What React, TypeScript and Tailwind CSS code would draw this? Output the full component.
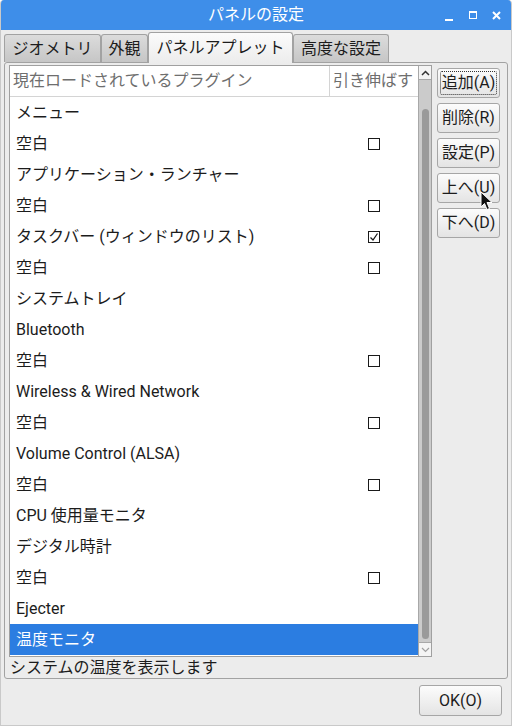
import React from "react";

interface PluginRow {
  label: string;
  stretch?: boolean;
  selected?: boolean;
}

const rows: PluginRow[] = [
  { label: "メニュー" },
  { label: "空白", stretch: false },
  { label: "アプリケーション・ランチャー" },
  { label: "空白", stretch: false },
  { label: "タスクバー (ウィンドウのリスト)", stretch: true },
  { label: "空白", stretch: false },
  { label: "システムトレイ" },
  { label: "Bluetooth" },
  { label: "空白", stretch: false },
  { label: "Wireless & Wired Network" },
  { label: "空白", stretch: false },
  { label: "Volume Control (ALSA)" },
  { label: "空白", stretch: false },
  { label: "CPU 使用量モニタ" },
  { label: "デジタル時計" },
  { label: "空白", stretch: false },
  { label: "Ejecter" },
  { label: "温度モニタ", selected: true },
];

const tabs = [
  { label: "ジオメトリ", w: "w-[97px]" },
  { label: "外観", w: "w-[47px]" },
  { label: "パネルアプレット", w: "w-[145px]", active: true },
  { label: "高度な設定", w: "w-[96px]" },
];

const buttons = ["追加(A)", "削除(R)", "設定(P)", "上へ(U)", "下へ(D)"];

function CheckBox({ checked }: { checked: boolean }) {
  return (
    <div className="w-[12px] h-[12px] border border-[#1a1a1a] bg-white flex items-center justify-center">
      {checked && (
        <svg width="10" height="10" viewBox="0 0 10 10">
          <path d="M1.5 5.5 L4 8 L8.5 1.5" fill="none" stroke="#1a1a1a" strokeWidth="1.3" />
        </svg>
      )}
    </div>
  );
}

export default function App() {
  return (
    <div className="relative w-[512px] h-[726px] flex flex-col bg-[#ececec] border-x border-b border-[#c9c9c9] rounded-t-[4px] overflow-hidden font-['Roboto','Noto_Sans_CJK_JP',sans-serif] text-[16px] text-[#1c1c1c]">
      {/* title bar */}
      <div className="h-[30px] shrink-0 bg-[#3e8ee9] flex items-center px-[10px]">
        <div className="w-[56px]" />
        <div className="flex-1 text-center text-white leading-none">パネルの設定</div>
        <div className="w-[56px] flex items-center justify-between">
          <div className="w-[8px] h-[2px] bg-white mt-[10px]" />
          <div className="w-[8px] h-[8px] border border-white border-t-2" />
          <svg width="9" height="9" viewBox="0 0 9 9">
            <path d="M1 1 L8 8 M8 1 L1 8" stroke="white" strokeWidth="2" />
          </svg>
        </div>
      </div>

      {/* tabs */}
      <div className="mt-[2px] px-[3px] h-[30px] flex items-end shrink-0">
        {tabs.map(t =>
          t.active ? (
            <div
              key={t.label}
              className={`${t.w} h-[31px] -mb-px relative z-10 rounded-t-[3px] border border-b-0 border-[#a2a2a2] bg-gradient-to-b from-[#fbfbfb] to-[#ececec] flex items-center justify-center`}
            >
              {t.label}
            </div>
          ) : (
            <div
              key={t.label}
              className={`${t.w} h-[28px] rounded-t-[3px] border border-b-0 border-[#a2a2a2] bg-gradient-to-b from-[#dcdcdc] to-[#c6c6c6] flex items-center justify-center`}
            >
              {t.label}
            </div>
          )
        )}
      </div>

      {/* frame */}
      <div className="mx-[3px] h-[617px] shrink-0 border border-[#a2a2a2] rounded-[3px] bg-[#ececec] flex pl-[4px] pt-[2px] gap-[5px]">
        <div className="w-[423px] flex flex-col">
          <div className="h-[592px] border border-[#a0a0a0] bg-white flex">
            <div className="w-[408px] flex flex-col">
              <div className="h-[31px] shrink-0 flex border-b border-[#d4d4d4] text-[#6e6e6e]">
                <div className="w-[319px] pl-[3px] flex items-center">現在ロードされているプラグイン</div>
                <div className="flex-1 border-l border-[#d4d4d4] pl-[3px] flex items-center">引き伸ばす</div>
              </div>
              {rows.map((r, i) => (
                <div
                  key={i}
                  className={`h-[31px] shrink-0 flex items-center ${r.selected ? "bg-[#2b7de1] text-white" : ""}`}
                >
                  <div className="w-[319px] pl-[6px]">{r.label}</div>
                  <div className="flex-1 flex justify-center">
                    {r.stretch !== undefined && <CheckBox checked={r.stretch} />}
                  </div>
                </div>
              ))}
            </div>
            {/* scrollbar */}
            <div className="w-[13px] border-l border-[#a8a8a8] bg-[#cbcbcb] flex flex-col">
              <div className="h-[14px] bg-[#f4f4f4] border-b border-[#a8a8a8] flex items-center justify-center">
                <svg width="9" height="6" viewBox="0 0 9 6">
                  <path d="M1 5 L4.5 1.5 L8 5" fill="none" stroke="#333" strokeWidth="1.5" />
                </svg>
              </div>
              <div className="flex-1 flex justify-center pt-[29px] pb-[3px]">
                <div className="w-[7px] h-full rounded-full bg-[#9a9a9a]" />
              </div>
              <div className="h-[14px] bg-[#f4f4f4] border-t border-[#a8a8a8] flex items-center justify-center">
                <svg width="9" height="6" viewBox="0 0 9 6">
                  <path d="M1 1 L4.5 4.5 L8 1" fill="none" stroke="#a0a0a0" strokeWidth="1.2" />
                </svg>
              </div>
            </div>
          </div>
          <div className="flex-1 pl-[1px] flex items-center leading-none">システムの温度を表示します</div>
        </div>

        <div className="w-[63px] pt-[3px] flex flex-col gap-[5px]">
          {buttons.map((b, i) => (
            <div
              key={b}
              className="relative h-[30px] rounded-[3px] border border-[#a6a6a6] bg-gradient-to-b from-[#fcfcfc] to-[#e4e4e4] flex items-center justify-center"
            >
              {i === 0 && (
                <div className="absolute inset-[2px] border border-dotted border-[#333] rounded-[2px]" />
              )}
              {b}
            </div>
          ))}
        </div>
      </div>

      {/* bottom */}
      <div className="flex justify-end pr-[9px] pt-[6px]">
        <div className="w-[83px] h-[31px] rounded-[3px] border border-[#a6a6a6] bg-gradient-to-b from-[#fcfcfc] to-[#e4e4e4] flex items-center justify-center">
          OK(O)
        </div>
      </div>

      {/* mouse pointer */}
      <svg className="absolute left-[479px] top-[191px]" width="13" height="20" viewBox="0 0 13 20">
        <path d="M1 1 L1 16 L4.5 12.5 L7 18.5 L9.5 17.5 L7 11.5 L12 11.5 Z" fill="#111" stroke="white" strokeWidth="1" />
      </svg>
    </div>
  );
}
